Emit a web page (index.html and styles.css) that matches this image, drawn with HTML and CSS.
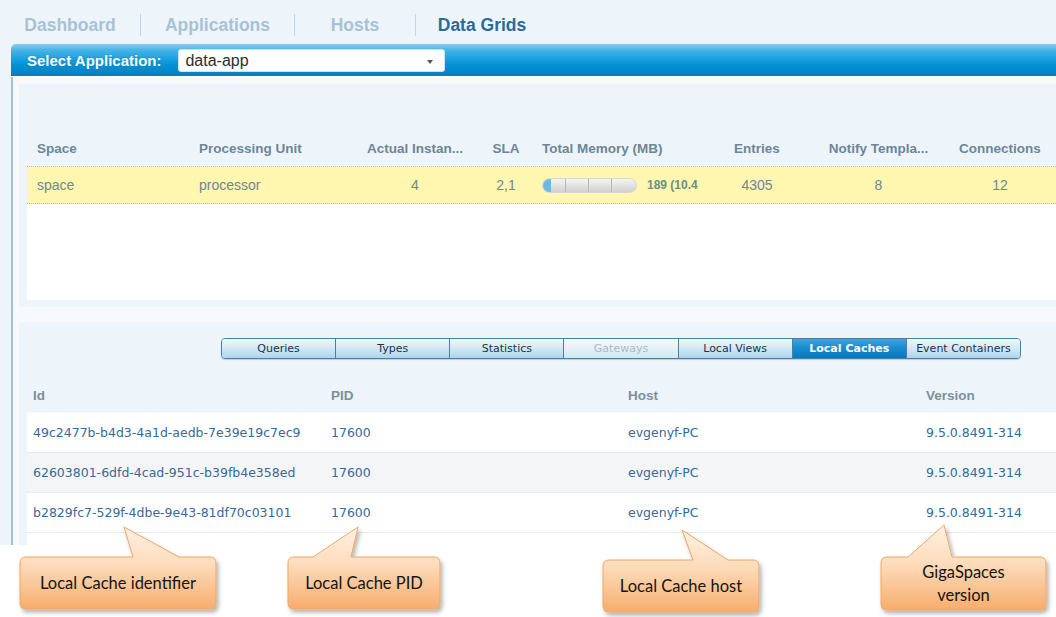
FILE: index.html
```html
<!DOCTYPE html>
<html>
<head>
<meta charset="utf-8">
<title>Data Grids - Local Caches</title>
<link rel="stylesheet" href="styles.css">
</head>
<body>
<div class="app">
  <nav class="topnav">
    <span class="navtab t-dash">Dashboard</span>
    <span class="navtab t-apps">Applications</span>
    <span class="navtab t-hosts">Hosts</span>
    <span class="navtab t-grids active">Data Grids</span>
  </nav>
  <div class="frame">
    <div class="appbar">
      <span class="appbar-label">Select Application:</span>
      <div class="select"><span class="select-value">data-app</span><span class="caret"></span></div>
    </div>
    <div class="content">
      <section class="panel spaces">
        <div class="sgrid shead">
          <div class="c left">Space</div>
          <div class="c left">Processing Unit</div>
          <div class="c mid">Actual Instan...</div>
          <div class="c mid">SLA</div>
          <div class="c left mem">Total Memory (MB)</div>
          <div class="c mid">Entries</div>
          <div class="c mid">Notify Templa...</div>
          <div class="c mid">Connections</div>
        </div>
        <div class="sgrid srow">
          <div class="c left">space</div>
          <div class="c left">processor</div>
          <div class="c mid">4</div>
          <div class="c mid">2,1</div>
          <div class="c left mem">
            <div class="membar"><span class="seg fill"></span><span class="seg"></span><span class="seg"></span><span class="seg last"></span></div>
            <span class="memval">189 (10.4</span>
          </div>
          <div class="c mid">4305</div>
          <div class="c mid">8</div>
          <div class="c mid">12</div>
        </div>
        <div class="sbody"></div>
      </section>
      <section class="panel caches">
        <div class="tabs">
          <span class="tab">Queries</span>
          <span class="tab">Types</span>
          <span class="tab">Statistics</span>
          <span class="tab disabled">Gateways</span>
          <span class="tab">Local Views</span>
          <span class="tab selected">Local Caches</span>
          <span class="tab">Event Containers</span>
        </div>
        <div class="lgrid lhead">
          <div class="lc">Id</div>
          <div class="lc">PID</div>
          <div class="lc">Host</div>
          <div class="lc">Version</div>
        </div>
        <div class="lbody">
          <div class="lgrid lrow">
            <div class="lc">49c2477b-b4d3-4a1d-aedb-7e39e19c7ec9</div>
            <div class="lc">17600</div>
            <div class="lc">evgenyf-PC</div>
            <div class="lc">9.5.0.8491-314</div>
          </div>
          <div class="lgrid lrow alt">
            <div class="lc">62603801-6dfd-4cad-951c-b39fb4e358ed</div>
            <div class="lc">17600</div>
            <div class="lc">evgenyf-PC</div>
            <div class="lc">9.5.0.8491-314</div>
          </div>
          <div class="lgrid lrow">
            <div class="lc">b2829fc7-529f-4dbe-9e43-81df70c03101</div>
            <div class="lc">17600</div>
            <div class="lc">evgenyf-PC</div>
            <div class="lc">9.5.0.8491-314</div>
          </div>
        </div>
      </section>
    </div>
  </div>
</div>

<svg class="callout-art" width="1056" height="617" viewBox="0 0 1056 617" xmlns="http://www.w3.org/2000/svg">
  <defs>
    <linearGradient id="peach" x1="0" y1="0" x2="0" y2="1">
      <stop offset="0" stop-color="#fff1e2"/>
      <stop offset="0.45" stop-color="#fddcbb"/>
      <stop offset="1" stop-color="#f7ad6c"/>
    </linearGradient>
    <filter id="shadow" x="-10%" y="-10%" width="130%" height="140%">
      <feDropShadow dx="2" dy="3" stdDeviation="2" flood-color="#000" flood-opacity="0.3"/>
    </filter>
  </defs>
  <g fill="url(#peach)" stroke="#efa565" stroke-width="1" filter="url(#shadow)">
    <path d="M26 557 L133 557 L124 527 L179 557 L210 557 Q216 557 216 563 L216 603 Q216 609 210 609 L26 609 Q20 609 20 603 L20 563 Q20 557 26 557 Z"/>
    <path d="M294 557 L313 557 L358 527 L351 557 L434 557 Q440 557 440 563 L440 603 Q440 609 434 609 L294 609 Q288 609 288 603 L288 563 Q288 557 294 557 Z"/>
    <path d="M609 560 L693 560 L682 530 L728 560 L753 560 Q759 560 759 566 L759 606 Q759 612 753 612 L609 612 Q603 612 603 606 L603 566 Q603 560 609 560 Z"/>
    <path d="M887 557 L908 557 L944 525 L952 557 L1040 557 Q1046 557 1046 563 L1046 604 Q1046 610 1040 610 L887 610 Q881 610 881 604 L881 563 Q881 557 887 557 Z"/>
  </g>
</svg>
<div class="callout-text ct1">Local Cache identifier</div>
<div class="callout-text ct2">Local Cache PID</div>
<div class="callout-text ct3">Local Cache host</div>
<div class="callout-text ct4">GigaSpaces<br>version</div>
</body>
</html>
```

FILE: styles.css
```css
* { box-sizing: border-box; }

html, body {
  margin: 0;
  padding: 0;
  background: #ffffff;
}

body {
  position: relative;
  width: 1056px;
  height: 617px;
  overflow: hidden;
  font-family: "Liberation Sans", Arial, sans-serif;
}

.app {
  height: 545px;
  background: #eef5fa;
  display: flex;
  flex-direction: column;
  overflow: hidden;
}

/* top navigation */
.topnav {
  display: flex;
  align-items: center;
  height: 44px;
  padding-top: 5px;
  font-weight: bold;
  font-size: 17.5px;
  color: #a8c2d5;
}

.navtab {
  text-align: center;
  line-height: 22px;
  border-right: 1px solid #c5d6e2;
}
.t-dash { width: 141px; }
.t-apps { width: 154px; }
.t-hosts { width: 121px; }
.t-grids { width: 132px; border-right: none; }
.navtab.active { color: #2a6b99; }

/* frame */
.frame {
  margin-left: 11px;
  flex: 1;
  display: flex;
  flex-direction: column;
}

.appbar {
  height: 33px;
  display: flex;
  align-items: center;
  padding-left: 16px;
  border-top-left-radius: 5px;
  border-top: 1px solid #8bc6e6;
  border-bottom: 1px solid #ffffff;
  background: linear-gradient(to bottom, #7fcbf1 0%, #4db4e7 15%, #18a0df 45%, #0092d4 65%, #0684c6 90%, #0c7ab7 100%);
}

.appbar-label {
  color: #ffffff;
  font-weight: bold;
  font-size: 15px;
  margin-right: 17px;
  text-shadow: 0 0 1px rgba(0, 60, 110, 0.4);
}

.select {
  width: 267px;
  height: 23px;
  background: #ffffff;
  border-radius: 3px;
  border: 1px solid #cfe3ef;
  display: flex;
  align-items: center;
  justify-content: space-between;
  padding: 0 11px 0 6px;
}
.select-value {
  font-size: 16px;
  color: #2d2d2d;
}
.caret {
  width: 0;
  height: 0;
  border-left: 3px solid transparent;
  border-right: 3px solid transparent;
  border-top: 4px solid #555;
  margin-top: 2px;
}

.content {
  flex: 1;
  border-left: 2px solid #a4c1d3;
  background: #f7fafc;
  padding: 7px 0 0 6px;
  display: flex;
  flex-direction: column;
  gap: 15px;
  overflow: hidden;
}

.panel {
  background: #edf5fb;
  padding-left: 8px;
}

/* spaces grid */
.spaces {
  padding-top: 46px;
  padding-bottom: 7px;
}

.sgrid {
  display: grid;
  grid-template-columns: 162px 166px 120px 62px 170px 100px 143px 100px;
  align-items: center;
}
.c { white-space: nowrap; overflow: hidden; }
.c.left { padding-left: 10px; }
.c.mem { padding-left: 5px; }
.c.mid { text-align: center; }

.shead {
  height: 36px;
  font-weight: bold;
  font-size: 13.5px;
  color: #6d8597;
}

.srow {
  height: 38px;
  background: #fff6b0;
  border-top: 1px dotted #bdb9a2;
  border-bottom: 1px dotted #bdb9a2;
  font-size: 14px;
  color: #6e8893;
}

.srow .mem {
  display: flex;
  align-items: center;
}

.membar {
  display: flex;
  width: 95px;
  height: 15px;
  border-radius: 8px;
  overflow: hidden;
  background: linear-gradient(to bottom, #f4f4f4, #d0d0d0);
  border: 1px solid #d6d6d6;
}
.seg {
  width: 23px;
  border-right: 1px solid #b8b8b8;
}
.seg.fill {
  background: linear-gradient(to right, #69bbe3 8px, transparent 8px);
}
.seg.last {
  flex: 1;
  border-right: none;
}
.memval {
  margin-left: 10px;
  white-space: nowrap;
  font-size: 12px;
  font-weight: bold;
  color: #6d9083;
}

.sbody {
  height: 96px;
  background: #ffffff;
}

/* local caches panel */
.caches {
  flex: 1;
  padding-top: 16px;
  display: flex;
  flex-direction: column;
}

.tabs {
  display: flex;
  width: 800px;
  height: 21px;
  margin-left: 194px;
  border: 1px solid #4e7e9e;
  border-radius: 4px;
  overflow: hidden;
  box-shadow: 0 1px 1px rgba(40, 80, 110, 0.25);
  font-family: "DejaVu Sans", Verdana, sans-serif;
  font-size: 11px;
}
.tab {
  flex: 1;
  text-align: center;
  line-height: 19px;
  color: #17334d;
  background: linear-gradient(to bottom, #eef7fc 0%, #d2e8f5 50%, #aed4ec 100%);
  border-left: 1px solid #4e7e9e;
}
.tab:first-child { border-left: none; }
.tab.disabled {
  color: #a9bac7;
  background: linear-gradient(to bottom, #f3f9fc 0%, #e4f0f7 50%, #d3e7f2 100%);
}
.tab.selected {
  color: #ffffff;
  font-weight: bold;
  background: linear-gradient(to bottom, #3fa3dc 0%, #168cd0 50%, #0a78bd 100%);
}

.lgrid {
  display: grid;
  grid-template-columns: 298px 297px 298px 1fr;
  align-items: center;
}
.lc {
  padding-left: 6px;
  white-space: nowrap;
}

.lhead {
  height: 36px;
  margin-top: 18px;
  font-weight: bold;
  font-size: 13.5px;
  color: #7e8f9c;
}

.lbody {
  flex: 1;
  background: #ffffff;
}

.lrow {
  height: 40px;
  border-bottom: 1px solid #e7eaed;
  font-family: "DejaVu Sans", Verdana, sans-serif;
  font-size: 12.5px;
  color: #356a9b;
}
.lrow.alt { background: #f4f5f6; }

/* callouts overlay */
.callout-art {
  position: absolute;
  left: 0;
  top: 0;
  pointer-events: none;
}

.callout-text {
  position: absolute;
  display: flex;
  align-items: center;
  justify-content: center;
  text-align: center;
  font-family: Lato, "Noto Sans", sans-serif;
  font-size: 16.5px;
  line-height: 23px;
  color: #141414;
}
.ct1 { left: 20px; top: 557px; width: 196px; height: 52px; }
.ct2 { left: 288px; top: 557px; width: 152px; height: 52px; }
.ct3 { left: 603px; top: 560px; width: 156px; height: 52px; }
.ct4 { left: 881px; top: 557px; width: 165px; height: 53px; }
```
